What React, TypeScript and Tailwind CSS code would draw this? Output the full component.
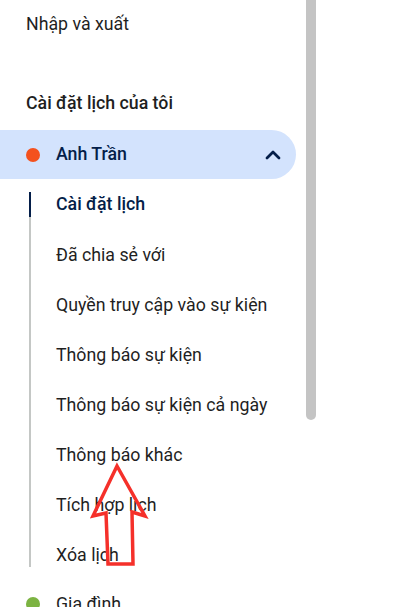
import { ChevronUp } from "lucide-react";

const subItems = [
  "Cài đặt lịch",
  "Đã chia sẻ với",
  "Quyền truy cập vào sự kiện",
  "Thông báo sự kiện",
  "Thông báo sự kiện cả ngày",
  "Thông báo khác",
  "Tích hợp lịch",
  "Xóa lịch",
];

function UpArrow() {
  return (
    <svg
      className="pointer-events-none absolute left-[88px] top-[462px]"
      width="64"
      height="108"
      viewBox="0 0 64 108"
      fill="none"
    >
      <path
        d="M29 4 L57 54 L44 50 L45 102 L20 102 L18 51 L5 54 Z"
        stroke="#f5302a"
        strokeWidth="3.5"
        strokeLinejoin="miter"
      />
    </svg>
  );
}

export default function App() {
  return (
    <div className="relative flex h-[607px] w-[397px] items-start overflow-hidden bg-white font-['Roboto',sans-serif] text-[17.75px] text-[#1f1f1f]">
      <div className="flex w-[306px] shrink-0 flex-col">
        <div className="flex h-12 shrink-0 items-center pl-[26px]">Nhập và xuất</div>

        <div className="mt-[35px] flex h-10 shrink-0 items-center pl-[26px] font-medium">
          Cài đặt lịch của tôi
        </div>

        <div className="mt-[7px] flex h-[49px] w-[296px] shrink-0 items-center rounded-r-full bg-[#d3e3fd] pl-[26px] pr-[11px] font-medium text-[#041e49]">
          <span className="h-[14px] w-[14px] rounded-full bg-[#f4511e]" />
          <span className="ml-4 flex-1">Anh Trần</span>
          <ChevronUp size={24} strokeWidth={2.75} color="#041e49" />
        </div>

        <div className="ml-[29px] mt-[13px] flex shrink-0 flex-col gap-[26px] border-l-2 border-[#c4c7c5]">
          {subItems.map((item, i) => (
            <div
              key={item}
              className={
                i === 0
                  ? "-ml-[2px] flex h-[25px] items-center border-l-2 border-[#041e49] pl-[25px] font-medium text-[#041e49]"
                  : "flex h-6 items-center pl-[25px]"
              }
            >
              {item}
            </div>
          ))}
        </div>

        <div className="mt-[13px] flex h-12 shrink-0 items-center pl-[26px]">
          <span className="h-[14px] w-[14px] rounded-full bg-[#7cb342]" />
          <span className="ml-4">Gia đình</span>
        </div>
      </div>

      <div className="h-[420px] w-[10px] shrink-0 rounded-b-[5px] bg-[#c4c4c4]" />

      <UpArrow />
    </div>
  );
}
